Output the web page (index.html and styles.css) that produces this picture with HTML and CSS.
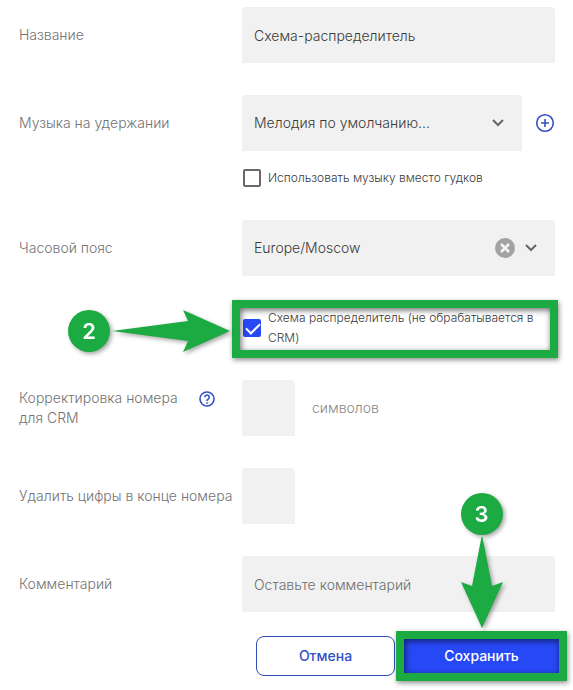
FILE: index.html
```html
<!DOCTYPE html>
<html lang="ru">
<head>
    <meta charset="UTF-8">
    <meta name="viewport" content="width=device-width, initial-scale=1.0">
    <title>Схема-распределитель</title>
    <link rel="stylesheet" href="styles.css">
</head>
<body>
    <form class="scheme-form">
        <div class="form-row">
            <label class="form-label" for="name">Название</label>
            <input class="field" type="text" id="name" value="Схема-распределитель">
        </div>

        <div class="form-row">
            <label class="form-label" for="music">Музыка на удержании</label>
            <div class="field-group">
                <div class="select-wrap">
                    <select class="field" id="music">
                        <option>Мелодия по умолчанию...</option>
                    </select>
                    <svg class="chevron" viewBox="0 0 12 8"><path d="M1 1l5 5 5-5"/></svg>
                </div>
                <button type="button" class="icon-button" aria-label="Добавить">
                    <svg width="20" height="20" viewBox="0 0 20 20"><circle cx="10" cy="10" r="8.3"/><path d="M10 6v8M6 10h8"/></svg>
                </button>
            </div>
            <label class="check">
                <input type="checkbox">
                <span>Использовать музыку вместо гудков</span>
            </label>
        </div>

        <div class="form-row">
            <label class="form-label" for="timezone">Часовой пояс</label>
            <div class="select-wrap">
                <select class="field" id="timezone">
                    <option>Europe/Moscow</option>
                </select>
                <button type="button" class="clear-button" aria-label="Очистить">
                    <svg width="20" height="20" viewBox="0 0 20 20"><circle cx="10" cy="10" r="10"/><path d="M6 6l8 8M14 6l-8 8"/></svg>
                </button>
                <svg class="chevron" viewBox="0 0 12 8"><path d="M1 1l5 5 5-5"/></svg>
            </div>
        </div>

        <div class="form-row">
            <div class="check-step">
                <label class="check">
                    <input type="checkbox" checked>
                    <span>Схема распределитель (не обрабатывается в CRM)</span>
                </label>
                <div class="highlight highlight-check"></div>
                <div class="callout callout-right">
                    <span class="step">2</span>
                    <svg width="118" height="42" viewBox="0 0 118 42"><path d="M0 21L76 11 71 0l47 21-47 21 5-11z"/></svg>
                </div>
            </div>
        </div>

        <div class="form-row">
            <div class="form-label with-help">
                <label for="correction">Корректировка номера для CRM</label>
                <button type="button" class="icon-button" aria-label="Справка">
                    <svg width="16" height="16" viewBox="0 0 16 16"><circle cx="8" cy="8" r="7"/><path d="M5.8 6.3a2.2 2.2 0 1 1 3.4 1.8C8.4 8.6 8 9 8 9.9M8 11.3v1.4"/></svg>
                </button>
            </div>
            <div class="field-group">
                <input class="field field-short" type="text" id="correction">
                <span class="unit">символов</span>
            </div>
        </div>

        <div class="form-row">
            <label class="form-label" for="trim">Удалить цифры в конце номера</label>
            <input class="field field-short" type="text" id="trim">
        </div>

        <div class="form-row">
            <label class="form-label" for="comment">Комментарий</label>
            <input class="field" type="text" id="comment" placeholder="Оставьте комментарий">
        </div>

        <div class="actions">
            <button type="button" class="btn btn-cancel">Отмена</button>
            <div class="save-step">
                <button type="submit" class="btn btn-save">Сохранить</button>
                <div class="highlight highlight-save"></div>
                <div class="callout callout-down">
                    <span class="step">3</span>
                    <svg width="42" height="91" viewBox="0 0 42 91"><path d="M20.5 0h1L31 49l11-4-21 46L0 45l11 4z"/></svg>
                </div>
            </div>
        </div>
    </form>
</body>
</html>
```
FILE: styles.css
```css
* {
    box-sizing: border-box;
    margin: 0;
    padding: 0;
}
body {
    font-family: Inter, "Open Sans", sans-serif;
    font-size: 14px;
    font-weight: 300;
    line-height: 20px;
    background-color: #fff;
    color: #3a3a3a;
}
button, input, select {
    font: inherit;
    color: inherit;
}
svg {
    display: block;
    fill: none;
}
.scheme-form {
    padding: 7px 0 14px;
}
.form-row {
    display: grid;
    grid-template-columns: 223px minmax(0, 1fr);
    align-items: center;
    padding: 0 18px 0 19px;
    margin-bottom: 32px;
}
.form-label {
    color: #737373;
}
.with-help {
    display: flex;
    align-items: flex-start;
    justify-content: space-between;
    padding-right: 27px;
}
.with-help label {
    max-width: 164px;
}
.with-help .icon-button {
    margin-top: 3px;
}
.field {
    display: block;
    width: 100%;
    height: 56px;
    padding: 0 12px;
    border: none;
    border-radius: 4px 4px 0 0;
    background-color: #f1f1f1;
    outline: none;
    appearance: none;
}
.field::placeholder {
    color: #6e6e6e;
    opacity: 1;
}
.field-short {
    width: 53px;
}
.field-group {
    display: flex;
    align-items: center;
    gap: 13px;
}
.unit {
    margin-left: 4px;
    color: #888;
}
.select-wrap {
    position: relative;
    flex: 1;
}
.chevron {
    position: absolute;
    top: 24px;
    right: 18px;
    width: 12px;
    height: 8px;
    stroke: #666;
    stroke-width: 2;
    pointer-events: none;
}
.icon-button {
    border: none;
    background: none;
    cursor: pointer;
    stroke: #3450c4;
    stroke-width: 1.6;
}
.clear-button {
    position: absolute;
    top: 18px;
    right: 40px;
    border: none;
    background: none;
    cursor: pointer;
}
.clear-button circle {
    fill: #a3a3a3;
}
.clear-button path {
    stroke: #f5f5f5;
    stroke-width: 2.5;
}
.check {
    grid-column: 2;
    display: flex;
    align-items: center;
    gap: 7px;
    font-size: 12px;
    cursor: pointer;
}
.form-row > .check {
    margin-top: 17px;
}
.check input {
    flex: none;
    width: 18px;
    height: 18px;
    margin-left: 1px;
    border: 2px solid #6a6a6a;
    border-radius: 2px;
    appearance: none;
    position: relative;
}
.check input:checked {
    border-color: #2748f5;
    background-color: #2748f5;
}
.check input:checked::after {
    content: "";
    position: absolute;
    left: 1px;
    top: 2px;
    width: 12px;
    height: 6px;
    border: solid #fff;
    border-width: 0 0 2px 2px;
    transform: rotate(-45deg);
}
.check-step {
    grid-column: 2;
    position: relative;
}
.highlight {
    position: absolute;
    border: 8px solid #1caa43;
    box-shadow: 1px 2px 5px rgba(0, 0, 0, 0.45), inset 1px 2px 6px rgba(0, 0, 0, 0.6);
    pointer-events: none;
}
.highlight-check {
    inset: -8px -3px -10px -10px;
}
.highlight-save {
    inset: -5px -7px;
}
.callout {
    position: absolute;
    display: flex;
    align-items: center;
    gap: 2px;
    filter: drop-shadow(2px 2px 2px rgba(0, 0, 0, 0.35));
    pointer-events: none;
}
.callout svg {
    fill: #1caa43;
}
.callout-right {
    top: 2px;
    right: calc(100% + 12px);
}
.callout-down {
    flex-direction: column;
    bottom: calc(100% + 8px);
    left: 0;
    right: 0;
}
.step {
    width: 42px;
    height: 42px;
    border-radius: 50%;
    background-color: #1caa43;
    color: #fff;
    font-size: 22px;
    font-weight: 600;
    line-height: 42px;
    text-align: center;
}
.actions {
    display: grid;
    grid-template-columns: 139fr 157fr;
    gap: 8px;
    padding: 0 13px 0 256px;
    margin-top: -8px;
}
.save-step {
    position: relative;
}
.btn {
    width: 100%;
    height: 40px;
    border: 1px solid #2f4bb5;
    border-radius: 8px;
    font-weight: 500;
    cursor: pointer;
}
.btn-cancel {
    background-color: #fff;
    color: #3450c4;
}
.btn-save {
    border-color: #2748f5;
    border-radius: 2px;
    background-color: #2748f5;
    color: #fff;
}
```
